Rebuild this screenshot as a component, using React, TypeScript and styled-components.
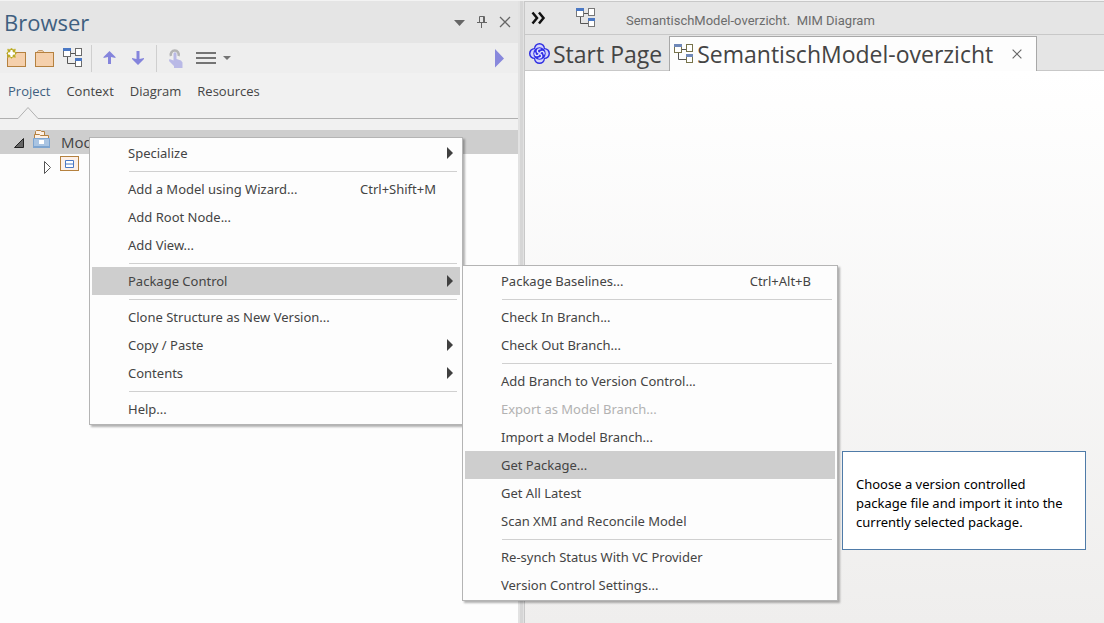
import React from "react";
import styled, { createGlobalStyle } from "styled-components";

const GlobalStyle = createGlobalStyle`
  *, *::before, *::after { box-sizing: border-box; }
  html, body { margin: 0; height: 100%; }
  #root { height: 100%; }
  body {
    font-family: "Open Sans", "Noto Sans", sans-serif;
    font-size: 13px;
    color: #444;
    background: #fdfdfd;
  }
  button { font: inherit; color: inherit; background: none; border: 0; padding: 0; margin: 0; text-align: left; }
  svg { display: block; flex: none; }
`;

const Page = styled.div`
  position: relative;
  display: flex;
  min-height: 100%;
  overflow: hidden;
  border-top: 1px solid #f3f3f3;
`;

/* ---------- browser panel ---------- */

const Sidebar = styled.aside`
  flex: 0 0 518px;
  display: flex;
  flex-direction: column;
  background: #fdfdfd;
`;

const TitleBar = styled.header`
  display: flex;
  align-items: center;
  justify-content: space-between;
  height: 42px;
  padding: 0 5px 0 4px;
  background: #e5e5e5;
`;

const Title = styled.h1`
  margin: 0;
  font-size: 22px;
  line-height: 32px;
  font-weight: 400;
  color: #3f5f80;
`;

const WindowControls = styled.div`
  display: flex;
  gap: 8px;
`;

const Toolbar = styled.div`
  display: flex;
  align-items: center;
  gap: 8px;
  height: 30px;
  padding: 0 12px 0 5px;
  background: #eee;
`;

const IconButton = styled.button`
  display: flex;
  align-items: center;
  justify-content: center;
`;

const Divider = styled.span`
  width: 1px;
  height: 27px;
  background: #cfcfcf;
`;

const Spacer = styled.span`
  flex: 1;
`;

const Tabs = styled.nav`
  display: flex;
  gap: 16px;
  height: 46px;
  padding: 0 8px;
  background: #f1f1f1;
  border-bottom: 1px solid #b0b0b0;
`;

const Tab = styled.button<{ $active?: boolean }>`
  position: relative;
  height: 36px;
  line-height: 36px;
  color: ${(p) => (p.$active ? "#3f5f80" : "#444")};
`;

const Notch = styled.svg`
  position: absolute;
  left: 10px;
  top: 34px;
`;

const Tree = styled.ul`
  list-style: none;
  margin: 0;
  padding: 11px 0 0;
  background: linear-gradient(#f1f1f1 11px, transparent 11px);
`;

const TreeRow = styled.li<{ $selected?: boolean; $level: number }>`
  display: flex;
  align-items: center;
  gap: 8px;
  height: 24px;
  padding-left: ${(p) => 13 + p.$level * 28}px;
  font-size: 15px;
  background: ${(p) => (p.$selected ? "#cecece" : "transparent")};
`;

const TreeLabel = styled.span`
  padding-left: 2px;
`;

const Splitter = styled.div`
  flex: 0 0 6px;
  background: linear-gradient(to right, #e2e2e2 2px, #d6d6d6 2px, #d6d6d6 5px, #e2e2e2 5px);
`;

/* ---------- diagram area ---------- */

const Main = styled.main`
  flex: 1;
  min-width: 0;
  display: flex;
  flex-direction: column;
  border-left: 1px solid #c8c8c8;
  border-top: 1px solid #c8c8c8;
`;

const CaptionBar = styled.div`
  display: flex;
  align-items: center;
  height: 33px;
  padding-left: 6px;
  background: #e5e5e5;
  border-bottom: 1px solid #c8c8c8;
  color: #6c6c6c;
  font-family: Roboto, "Noto Sans", sans-serif;
  font-size: 13px;
`;

const CaptionIcon = styled.span`
  margin: 0 30px;
`;

const CaptionText = styled.span`
  white-space: pre;
  padding-top: 4px;
`;

const DocTabs = styled.div`
  display: flex;
  align-items: stretch;
  height: 36px;
  padding-top: 1px;
  background: linear-gradient(#e5e5e5 35px, #c8c8c8 35px);
`;

const DocTab = styled.div<{ $active?: boolean }>`
  display: flex;
  align-items: center;
  gap: 3px;
  padding: 0 ${(p) => (p.$active ? 12 : 7)}px 0 4px;
  white-space: nowrap;
  font-size: 23px;
  background: ${(p) => (p.$active ? "#fdfdfd" : "transparent")};
  border: solid #a8a8a8;
  border-width: ${(p) => (p.$active ? "1px 1px 0 1px" : "0")};
`;

const DocTabLabel = styled.button`
  line-height: 34px;
`;

const CloseSlot = styled.span`
  margin-left: 14px;
`;

const Canvas = styled.section`
  flex: 1;
  background: linear-gradient(#ffffff, #efeeed);
`;

/* ---------- floating menus ---------- */

const Menu = styled.div<{ $x: number; $y: number; $w: number }>`
  position: absolute;
  left: ${(p) => p.$x}px;
  top: ${(p) => p.$y}px;
  width: ${(p) => p.$w}px;
  padding: 1px 2px;
  background: #fdfdfd;
  border: 1px solid #b4b4b4;
  box-shadow: 2px 2px 2px rgba(0, 0, 0, 0.3);
  font-family: "Noto Sans", "Open Sans", sans-serif;
`;

const MenuItem = styled.button<{ $highlighted?: boolean }>`
  display: flex;
  align-items: center;
  width: 100%;
  height: 28px;
  padding: 0 7px 0 36px;
  background: ${(p) => (p.$highlighted ? "#cecece" : "transparent")};
  color: #444;
  white-space: nowrap;
  &:disabled { color: #b2b2b2; }
`;

const MenuLabel = styled.span`
  flex: 1;
`;

const MenuTrail = styled.span`
  display: flex;
  justify-content: flex-end;
  width: 17px;
`;

const MenuRule = styled.hr`
  height: 1px;
  margin: 4px 3px 3px 37px;
  border: 0;
  background: #d0d0d0;
`;

const Tooltip = styled.div`
  position: absolute;
  left: 842px;
  top: 450px;
  width: 244px;
  padding: 23px 13px 17px;
  background: #fff;
  border: 1px solid #4f7ba8;
  color: #000;
  font-family: "Noto Sans", "Open Sans", sans-serif;
  line-height: 19px;
`;

/* ---------- icons ---------- */

const DiagramIcon = ({ stroke = "#6b6b6b", accent = "#4b78c4" }: { stroke?: string; accent?: string }) => (
  <svg width="20" height="20" viewBox="0 0 20 20" fill="#fff" stroke={stroke}>
    <path d="M8 5.500h4M4.500 8v7.500h7.500" fill="none" stroke="#555" />
    <rect x="0.500" y="0.500" width="7" height="8" />
    <rect x="12.500" y="0.500" width="6" height="7" />
    <rect x="12.500" y="10.500" width="6" height="8" />
    <path d="M0 0h8v3h-8zM12 10h7v3h-7z" fill={accent} stroke="none" />
  </svg>
);

const FolderIcon = ({ isNew = false }: { isNew?: boolean }) => (
  <svg width={isNew ? 22 : 20} height="20" viewBox={isNew ? "-2 0 22 20" : "0 0 20 20"}>
    {!isNew && <path d="M2.500 5V3.500l1-1h4l2 2.500" fill="#f5d0ac" stroke="#c29a6a" />}
    <rect x="0.500" y="4.500" width="18" height="14" fill="#f5d0ac" stroke="#b5813f" />
    {isNew && (
      <g>
        <path
          d="M4.500 0l1.500 1.500 2.500-.5-.500 2.500L9.500 5.500 8 7l.500 2.500L6 9l-1.500 1.500L3 9l-2.500.500L1 7l-1.500-1.500L1 3.500.500 1 3 1.500z"
          fill="#b8a81e"
          stroke="#c9bc4a"
          strokeWidth="0.500"
        />
        <path d="M4.500 2v7M1 5.500h7" stroke="#fff" strokeWidth="2" />
        <circle cx="4.500" cy="5.500" r="2.200" fill="#fff" />
      </g>
    )}
  </svg>
);

const ArrowIcon = ({ down = false }: { down?: boolean }) => (
  <svg width="20" height="16" viewBox="0 0 20 16" fill="#8484dc">
    <path d={down ? "M8.500 1h3v8l4.500-1v1l-6 6-6-6v-1l4.500 1z" : "M8 14h3V7l4.500 1V7l-6-6-6 6v1L8 7z"} />
  </svg>
);

const TouchIcon = () => (
  <svg width="20" height="22" viewBox="0 0 20 22">
    <path d="M6 9a4 4 0 1 1 7.500 0" fill="none" stroke="#b4b4b4" strokeWidth="2.500" />
    <path
      d="M8.500 6.500q1.500-2.500 3 0V12l4.500 1.500 1.500 2V21h-8.500v-2l-5-5 .500-2 4 1.500z"
      fill="#b9b9e6"
    />
  </svg>
);

const ListMenuIcon = () => (
  <svg width="40" height="16" viewBox="0 0 40 16" fill="#747474">
    <path d="M3 2h20v2H3zM3 7h20v2H3zM3 12h20v2H3zM30 6h8l-4 4z" />
  </svg>
);

const CloseIcon = ({ size = 16 }: { size?: number }) => (
  <svg width={size} height="16" viewBox="0 0 16 16">
    <path d="M3 3l10 10M13 3L3 13" stroke="#666" strokeWidth="1.300" />
  </svg>
);

const StartIcon = () => (
  <svg width="21" height="21" viewBox="0 0 21 21">
    <g fill="#2f2fe2">
      <circle cx="10.500" cy="5.500" r="5.500" />
      <circle cx="15.500" cy="10.500" r="5.500" />
      <circle cx="10.500" cy="15.500" r="5.500" />
      <circle cx="5.500" cy="10.500" r="5.500" />
    </g>
    <g fill="#d4d4fb">
      <circle cx="10.500" cy="5.800" r="4.300" />
      <circle cx="15.200" cy="10.500" r="4.300" />
      <circle cx="10.500" cy="15.200" r="4.300" />
      <circle cx="5.800" cy="10.500" r="4.300" />
    </g>
    <circle cx="10.500" cy="10.500" r="6.200" fill="#3030e6" />
    <path
      d="M10.500 10.500C7 9 8 5.500 11.500 6M10.500 10.500C12 7 15.500 8 15 11.500M10.500 10.500C14 12 13 15.500 9.500 15M10.500 10.500C9 14 5.500 13 6 9.500"
      fill="none"
      stroke="#e8e8ff"
      strokeWidth="1.300"
    />
  </svg>
);

const ModelIcon = () => (
  <svg width="18" height="24" viewBox="0 0 18 24">
    <path d="M2.500 5V1.500l1-1h4l1 1h3V5" fill="#fdf0e4" stroke="#b5813f" />
    <path d="M1.500 9V4.500h5l1 1h8V9" fill="#fdf0e4" stroke="#b5813f" />
    <path d="M0.500 8.500h16v9h-16z" fill="#a9c4e2" stroke="#7ea5d0" />
    <path d="M0 16h17v2H0z" fill="#7ea5d0" />
    <path d="M6 10h5v4H6z" fill="#fff" />
  </svg>
);

const ViewIcon = () => (
  <svg width="20" height="24" viewBox="0 0 20 24">
    <rect x="0.500" y="2.500" width="18" height="14" fill="#fdf0e8" stroke="#b5813f" />
    <path d="M5.500 6.500h8v7h-8zM5.500 10h8" fill="#fff" stroke="#4b78c4" />
  </svg>
);

/* ---------- data ---------- */

type Entry =
  | { label: string; shortcut?: string; submenu?: boolean; highlighted?: boolean; disabled?: boolean }
  | "rule";

const contextMenu: Entry[] = [
  { label: "Specialize", submenu: true },
  "rule",
  { label: "Add a Model using Wizard...", shortcut: "Ctrl+Shift+M" },
  { label: "Add Root Node..." },
  { label: "Add View..." },
  "rule",
  { label: "Package Control", submenu: true, highlighted: true },
  "rule",
  { label: "Clone Structure as New Version..." },
  { label: "Copy / Paste", submenu: true },
  { label: "Contents", submenu: true },
  "rule",
  { label: "Help..." },
];

const packageMenu: Entry[] = [
  { label: "Package Baselines...", shortcut: "Ctrl+Alt+B" },
  "rule",
  { label: "Check In Branch..." },
  { label: "Check Out Branch..." },
  "rule",
  { label: "Add Branch to Version Control..." },
  { label: "Export as Model Branch...", disabled: true },
  { label: "Import a Model Branch..." },
  { label: "Get Package...", highlighted: true },
  { label: "Get All Latest" },
  { label: "Scan XMI and Reconcile Model" },
  "rule",
  { label: "Re-synch Status With VC Provider" },
  { label: "Version Control Settings..." },
];

const PopupMenu = ({ entries, x, y, w }: { entries: Entry[]; x: number; y: number; w: number }) => (
  <Menu role="menu" $x={x} $y={y} $w={w}>
    {entries.map((e, i) =>
      e === "rule" ? (
        <MenuRule key={i} />
      ) : (
        <MenuItem key={i} role="menuitem" $highlighted={e.highlighted} disabled={e.disabled}>
          <MenuLabel>{e.label}</MenuLabel>
          {e.shortcut && <span>{e.shortcut}</span>}
          <MenuTrail>
            {e.submenu && (
              <svg width="6" height="12" viewBox="0 0 6 12">
                <path d="M0 0l6 6-6 6z" fill="#404040" />
              </svg>
            )}
          </MenuTrail>
        </MenuItem>
      )
    )}
  </Menu>
);

export default function App() {
  return (
    <>
      <GlobalStyle />
      <Page>
        <Sidebar>
          <TitleBar>
            <Title>Browser</Title>
            <WindowControls>
              <IconButton aria-label="Panel options">
                <svg width="14" height="16" viewBox="0 0 14 16">
                  <path d="M1 6h11l-5.500 6z" fill="#666" />
                </svg>
              </IconButton>
              <IconButton aria-label="Pin panel">
                <svg width="14" height="16" viewBox="0 0 14 16" fill="none" stroke="#666">
                  <path d="M4.500 8V2.500h5V8M8.500 3v5M2 8.500h10M6.500 9v5" />
                </svg>
              </IconButton>
              <IconButton aria-label="Close panel">
                <CloseIcon />
              </IconButton>
            </WindowControls>
          </TitleBar>

          <Toolbar>
            <IconButton aria-label="New model"><FolderIcon isNew /></IconButton>
            <IconButton aria-label="New package"><FolderIcon /></IconButton>
            <IconButton aria-label="New diagram"><DiagramIcon /></IconButton>
            <Divider />
            <IconButton aria-label="Move up"><ArrowIcon /></IconButton>
            <IconButton aria-label="Move down"><ArrowIcon down /></IconButton>
            <Divider />
            <IconButton aria-label="Select"><TouchIcon /></IconButton>
            <IconButton aria-label="Menu"><ListMenuIcon /></IconButton>
            <Spacer />
            <IconButton aria-label="Expand">
              <svg width="11" height="20" viewBox="0 0 11 20">
                <path d="M0 1l9 9.500-9 9z" fill="#8888dc" />
              </svg>
            </IconButton>
          </Toolbar>

          <Tabs>
            <Tab $active>
              Project
              <Notch width="20" height="12" viewBox="0 0 20 12">
                <path d="M0 11.500L10 0.500 20 11.500V12H0z" fill="#f1f1f1" />
                <path d="M0 11.500L10 0.500 20 11.500" fill="none" stroke="#b0b0b0" />
              </Notch>
            </Tab>
            <Tab>Context</Tab>
            <Tab>Diagram</Tab>
            <Tab>Resources</Tab>
          </Tabs>

          <Tree>
            <TreeRow $selected $level={0}>
              <svg width="12" height="24" viewBox="0 0 12 24">
                <path d="M10.500 8.500v9h-9z" fill="#666" stroke="#222" />
              </svg>
              <ModelIcon />
              <TreeLabel>Model</TreeLabel>
            </TreeRow>
            <TreeRow $level={1}>
              <svg width="11" height="24" viewBox="0 0 11 24">
                <path d="M3.500 7.500L9.500 13.500l-6 6z" fill="#fff" stroke="#555" />
              </svg>
              <ViewIcon />
            </TreeRow>
          </Tree>
        </Sidebar>

        <Splitter />

        <Main>
          <CaptionBar>
            <svg width="15" height="14" viewBox="0 0 15 14" fill="none" stroke="#111" strokeWidth="2.500">
              <path d="M1.500 1.500L6 7l-4.500 5.500M8 1.500l4.500 5.500-4.500 5.500" />
            </svg>
            <CaptionIcon><DiagramIcon stroke="#777" /></CaptionIcon>
            <CaptionText>{"SemantischModel-overzicht.  MIM Diagram"}</CaptionText>
          </CaptionBar>
          <DocTabs>
            <DocTab>
              <StartIcon />
              <DocTabLabel>Start Page</DocTabLabel>
            </DocTab>
            <DocTab $active>
              <DiagramIcon stroke="#77734a" accent="#6f88b8" />
              <DocTabLabel>SemantischModel-overzicht</DocTabLabel>
              <CloseSlot>
                <IconButton aria-label="Close tab"><CloseIcon size={14} /></IconButton>
              </CloseSlot>
            </DocTab>
          </DocTabs>
          <Canvas />
        </Main>

        <PopupMenu entries={contextMenu} x={89} y={136} w={374} />
        <PopupMenu entries={packageMenu} x={462} y={264} w={376} />
        <Tooltip role="tooltip">
          Choose a version controlled package file and import it into the currently selected package.
        </Tooltip>
      </Page>
    </>
  );
}
